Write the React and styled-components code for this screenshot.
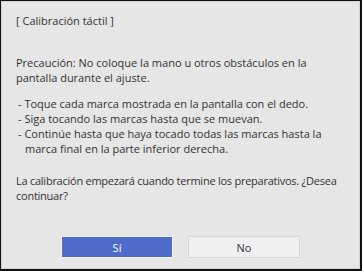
import styled, { createGlobalStyle } from "styled-components";

const Global = createGlobalStyle`
  html, body {
    margin: 0;
    padding: 0;
    background: #000;
  }
  body {
    font-family: "Open Sans", "Liberation Sans", sans-serif;
  }
`;

const Frame = styled.div`
  width: 362px;
  height: 271px;
  box-sizing: border-box;
  border-top: 1px solid #111;
  border-left: 1px solid #111;
  border-right: 2px solid #111;
  border-bottom: 2px solid #111;
  background: #e6e6e6;
`;

const Dialog = styled.div`
  height: 100%;
  box-sizing: border-box;
  border: 1px solid #d2d2d2;
  padding: 11px 14px 10px 14px;
  display: flex;
  flex-direction: column;
  color: #333;
  font-size: 11px;
  line-height: 15px;
`;

const Heading = styled.div`
  margin-bottom: 27px;
`;

const Para = styled.p`
  margin: 0 0 11px 0;
  letter-spacing: ${(p) => (p.$tight ? "-0.25px" : "normal")};
`;

const List = styled.ul`
  list-style: none;
  margin: 0 0 17px 0;
  padding: 0 0 0 2px;
`;

const Item = styled.li`
  padding-left: 7px;
  text-indent: -7px;
`;

const Buttons = styled.div`
  margin-top: auto;
  display: flex;
  justify-content: center;
  gap: 15px;
`;

const Button = styled.button`
  width: 112px;
  height: 22px;
  box-sizing: border-box;
  font-family: inherit;
  font-size: 11px;
  border: 1px solid ${(p) => (p.$primary ? "#f4f4f4" : "#d6d6d6")};
  background: ${(p) => (p.$primary ? "#4f6bc9" : "#f0f0f0")};
  color: ${(p) => (p.$primary ? "#fff" : "#333")};
  padding: 0;
`;

export default function App() {
  return (
    <>
      <Global />
      <Frame>
        <Dialog>
          <Heading>[ Calibración táctil ]</Heading>
          <Para>
            Precaución: No coloque la mano u otros obstáculos en la pantalla durante el ajuste.
          </Para>
          <List>
            <Item>- Toque cada marca mostrada en la pantalla con el dedo.</Item>
            <Item>- Siga tocando las marcas hasta que se muevan.</Item>
            <Item>
              - Continúe hasta que haya tocado todas las marcas hasta la marca final en la parte inferior derecha.
            </Item>
          </List>
          <Para $tight>
            La calibración empezará cuando termine los preparativos. ¿Desea continuar?
          </Para>
          <Buttons>
            <Button $primary>Sí</Button>
            <Button>No</Button>
          </Buttons>
        </Dialog>
      </Frame>
    </>
  );
}
